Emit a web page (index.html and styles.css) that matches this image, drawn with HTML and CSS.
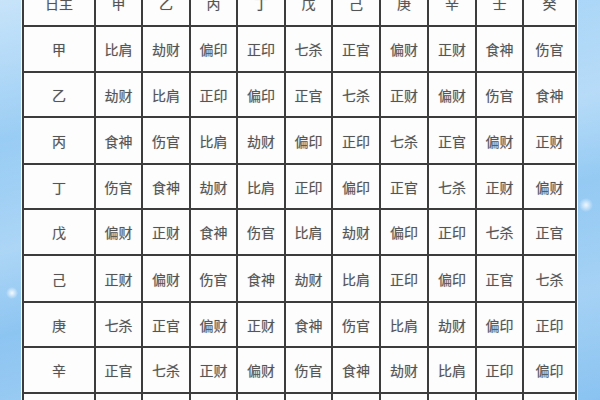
FILE: index.html
```html
<!DOCTYPE html>
<html lang="zh">
<head>
<meta charset="utf-8">
<title>十神表</title>
<link rel="stylesheet" href="styles.css">
</head>
<body>
<div class="sheet">
  <div class="grid">
    <div class="cell">日主</div><div class="cell">甲</div><div class="cell">乙</div><div class="cell">丙</div><div class="cell">丁</div><div class="cell">戊</div><div class="cell">己</div><div class="cell">庚</div><div class="cell">辛</div><div class="cell">壬</div><div class="cell">癸</div>
    <div class="cell">甲</div><div class="cell">比肩</div><div class="cell">劫财</div><div class="cell">偏印</div><div class="cell">正印</div><div class="cell">七杀</div><div class="cell">正官</div><div class="cell">偏财</div><div class="cell">正财</div><div class="cell">食神</div><div class="cell">伤官</div>
    <div class="cell">乙</div><div class="cell">劫财</div><div class="cell">比肩</div><div class="cell">正印</div><div class="cell">偏印</div><div class="cell">正官</div><div class="cell">七杀</div><div class="cell">正财</div><div class="cell">偏财</div><div class="cell">伤官</div><div class="cell">食神</div>
    <div class="cell">丙</div><div class="cell">食神</div><div class="cell">伤官</div><div class="cell">比肩</div><div class="cell">劫财</div><div class="cell">偏印</div><div class="cell">正印</div><div class="cell">七杀</div><div class="cell">正官</div><div class="cell">偏财</div><div class="cell">正财</div>
    <div class="cell">丁</div><div class="cell">伤官</div><div class="cell">食神</div><div class="cell">劫财</div><div class="cell">比肩</div><div class="cell">正印</div><div class="cell">偏印</div><div class="cell">正官</div><div class="cell">七杀</div><div class="cell">正财</div><div class="cell">偏财</div>
    <div class="cell">戊</div><div class="cell">偏财</div><div class="cell">正财</div><div class="cell">食神</div><div class="cell">伤官</div><div class="cell">比肩</div><div class="cell">劫财</div><div class="cell">偏印</div><div class="cell">正印</div><div class="cell">七杀</div><div class="cell">正官</div>
    <div class="cell">己</div><div class="cell">正财</div><div class="cell">偏财</div><div class="cell">伤官</div><div class="cell">食神</div><div class="cell">劫财</div><div class="cell">比肩</div><div class="cell">正印</div><div class="cell">偏印</div><div class="cell">正官</div><div class="cell">七杀</div>
    <div class="cell">庚</div><div class="cell">七杀</div><div class="cell">正官</div><div class="cell">偏财</div><div class="cell">正财</div><div class="cell">食神</div><div class="cell">伤官</div><div class="cell">比肩</div><div class="cell">劫财</div><div class="cell">偏印</div><div class="cell">正印</div>
    <div class="cell">辛</div><div class="cell">正官</div><div class="cell">七杀</div><div class="cell">正财</div><div class="cell">偏财</div><div class="cell">伤官</div><div class="cell">食神</div><div class="cell">劫财</div><div class="cell">比肩</div><div class="cell">正印</div><div class="cell">偏印</div>
    <div class="cell">壬</div><div class="cell">偏印</div><div class="cell">正印</div><div class="cell">七杀</div><div class="cell">正官</div><div class="cell">偏财</div><div class="cell">正财</div><div class="cell">食神</div><div class="cell">伤官</div><div class="cell">比肩</div><div class="cell">劫财</div>
  </div>
</div>
</body>
</html>
```

FILE: styles.css
```css
html, body {
  margin: 0;
  padding: 0;
  height: 100%;
  overflow: hidden;
}

body {
  background:
    radial-gradient(circle at 12px 293px, rgba(255,255,255,0.9) 0, rgba(255,255,255,0) 6px),
    radial-gradient(circle at 586px 205px, rgba(255,255,255,0.85) 0, rgba(255,255,255,0) 7px),
    linear-gradient(165deg, rgba(255,255,255,0.35) 0%, rgba(255,255,255,0) 25%, rgba(255,255,255,0.25) 45%, rgba(255,255,255,0) 60%, rgba(255,255,255,0.2) 80%, rgba(255,255,255,0) 100%),
    linear-gradient(180deg, #a9d5f7 0%, #93c9f3 50%, #8ac3f1 100%);
  font-family: "Noto Sans CJK SC", "Noto Sans", sans-serif;
}

.sheet {
  margin-left: 21px;
  width: 555px;
  padding: 0 1px;
  margin-top: -20px;
  background: #f4f8fb;
}

.grid {
  display: grid;
  grid-template-columns: 72px 47px 48px 47px 48px 47px 48px 48px 48px 47px 53px;
  grid-template-rows: 47px 46px 45px 47px 45px 46px 47px 45px 46px 46px;
  border-left: 2px solid #3c3c3c;
  background: #fdfdfd;
}

.cell {
  display: flex;
  align-items: center;
  justify-content: center;
  border-right: 2px solid #3c3c3c;
  border-bottom: 2px solid #3c3c3c;
  font-size: 14px;
  color: #555;
  text-shadow: 0 0 1px rgba(0,0,0,0.25);
  background: #fdfdfd;
}
```
